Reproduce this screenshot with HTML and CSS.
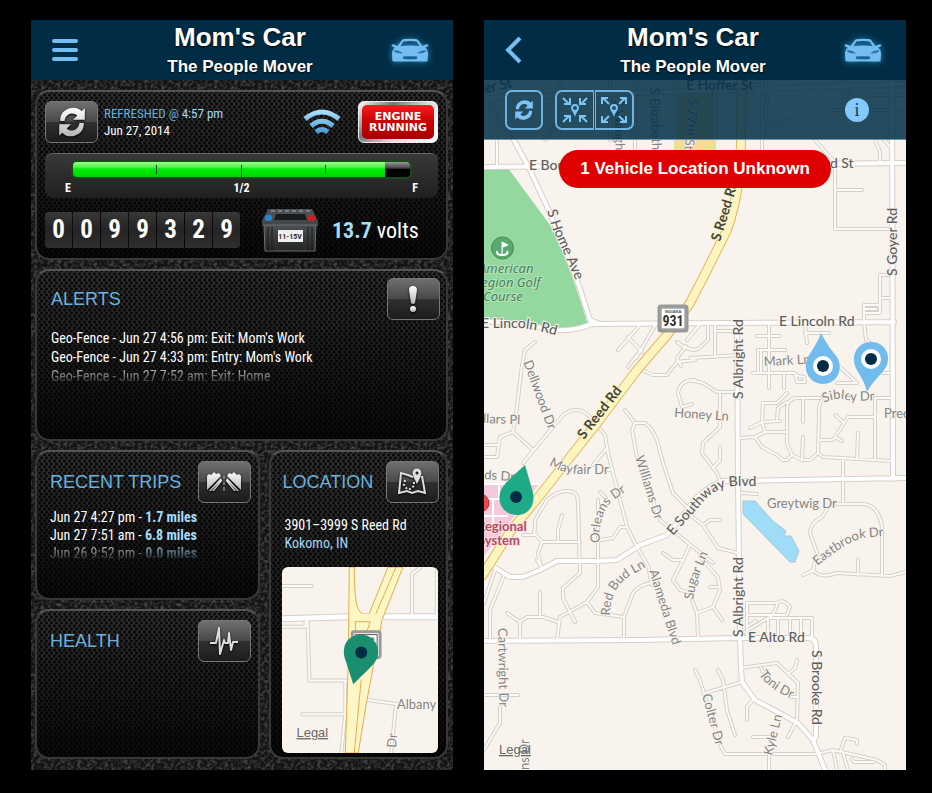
FILE: index.html
```html
<!DOCTYPE html>
<html lang="en">
<head>
<meta charset="utf-8">
<meta name="viewport" content="width=device-width, initial-scale=1">
<title>Mom's Car</title>
<link rel="stylesheet" href="styles.css">
</head>
<body>
<svg class="defs" aria-hidden="true">
  <defs>
    <linearGradient id="silver" x1="0" y1="0" x2="0" y2="1"><stop offset="0" stop-color="#fff"/><stop offset="1" stop-color="#b4b4b4"/></linearGradient>
    <linearGradient id="sky" x1="0" y1="0" x2="0" y2="1"><stop offset="0" stop-color="#a5dcff"/><stop offset="1" stop-color="#4f9fd0"/></linearGradient>
    <linearGradient id="case" x1="0" y1="0" x2="0" y2="1"><stop offset="0" stop-color="#4d5052"/><stop offset="1" stop-color="#222425"/></linearGradient>
    <symbol id="car" viewBox="0 0 110 72">
      <path fill-rule="evenodd" d="M19 23 L31 6 Q34 2 55 2 Q76 2 79 6 L91 23 L104 18 Q110 18 108 23 L99 28 Q108 35 107 48 L106 65 Q106 68 101 68 L9 68 Q4 68 4 65 L3 48 Q2 35 11 28 L2 23 Q0 18 6 18 Z M27 24 Q55 19 83 24 L74 10 Q55 7 36 10 Z M9 38 Q18 46 34 44 Q26 35 9 35 Z M101 38 Q92 46 76 44 Q84 35 101 35 Z M37 53 Q34 53 34 57 Q34 61 38 61 L72 61 Q76 61 76 57 Q76 53 73 53 Z"/>
    </symbol>
    <symbol id="refresh" viewBox="0 0 30 30">
      <path d="M4 14 C3 2 19 -2 24 5 L27 2 V13 H16 L20 9 C16 5 9 7 8 14 Z M26 16 C27 28 11 32 6 25 L3 28 V17 H14 L10 21 C14 25 21 23 22 16 Z"/>
    </symbol>
    <symbol id="pin" viewBox="0 0 8 13">
      <path fill-rule="evenodd" d="M4 0A4 4 0 0 1 8 4C8 6 5.500 8 4 13C2.500 8 0 6 0 4A4 4 0 0 1 4 0ZM4 2A2 2 0 1 0 4 6A2 2 0 1 0 4 2Z"/>
    </symbol>
  </defs>
</svg>

<section class="phone" aria-label="Dashboard">
  <header class="bar">
    <button class="bar-button" aria-label="Menu"><svg width="28" height="22" viewBox="0 0 28 22"><path d="M3 2H25M3 11H25M3 20H25" stroke="#74bdf0" stroke-width="4" stroke-linecap="round"/></svg></button>
    <div class="titles"><h1>Mom's Car</h1><p>The People Mover</p></div>
    <button class="bar-button" aria-label="Vehicle"><svg class="car" width="38" height="25"><use href="#car"/></svg></button>
  </header>
  <main class="dash">
    <section class="panel status">
      <div class="status-row">
        <button class="tile" aria-label="Refresh"><svg width="32" height="32" fill="url(#silver)"><use href="#refresh"/></svg></button>
        <p class="stamp"><span class="blue">REFRESHED @</span> <span class="pale">4:57 pm</span><br>Jun 27, 2014</p>
        <svg class="wifi" width="38" height="26" viewBox="0 0 38 26" fill="none" stroke="url(#sky)" stroke-width="5"><path d="M2 10Q19 -4 36 10M8 17Q19 7.500 30 17M13 23Q19 18 25 23"/></svg>
        <button class="engine"><span>ENGINE<br>RUNNING</span></button>
      </div>
      <div class="fuel">
        <div class="track" role="meter" aria-label="Fuel level" aria-valuemin="0" aria-valuemax="100" aria-valuenow="92"><div class="level" style="width:92.5%"></div><div class="ticks"><i></i><i></i><i></i></div></div>
        <div class="marks"><span>E</span><span>1/2</span><span>F</span></div>
      </div>
      <div class="status-row readings">
        <div class="odometer" aria-label="Odometer"><span>0</span><span>0</span><span>9</span><span>9</span><span>3</span><span>2</span><span>9</span></div>
        <svg class="battery" width="58" height="44" viewBox="0 0 58 44">
          <path d="M7 1H51L57 13H1Z" fill="#4b5056"/><path d="M10 3H49" stroke="#777d82" stroke-width="2" stroke-dasharray="4 3"/>
          <path d="M15 6H44L46 12H13Z" fill="#191b1c"/>
          <path d="M1 12H57V18H1Z" fill="#44474a"/><path d="M3 17H55L54 43H4Z" fill="url(#case)" stroke="#6c7072"/>
          <path d="M7 19V43M11 19V43M47 19V43M51 19V43" stroke="#181a1b"/>
          <rect x="4" y="7" width="7" height="6" rx="2" fill="#1e88d6"/><rect x="47" y="7" width="7" height="6" rx="2" fill="#cf1f24"/>
          <rect x="17" y="22" width="25" height="12" fill="#f1f1f1"/><text x="29" y="31" class="cell">11-15V</text>
        </svg>
        <p class="volts"><b>13.7</b> volts</p>
      </div>
    </section>

    <section class="panel alerts">
      <div class="panel-head"><h2>ALERTS</h2>
        <button class="tile" aria-label="Alerts"><svg width="14" height="28" viewBox="0 0 14 28" fill="url(#silver)"><path d="M3 5Q3 1 7 1Q11 1 11 5L9 18Q7 20 5 18Z"/><circle cx="7" cy="24" r="3"/></svg></button></div>
      <ul class="list">
        <li>Geo-Fence - Jun 27 4:56 pm: Exit: Mom's Work</li>
        <li>Geo-Fence - Jun 27 4:33 pm: Entry: Mom's Work</li>
        <li class="fading">Geo-Fence - Jun 27 7:52 am: Exit: Home</li>
      </ul>
    </section>

    <section class="panel trips">
      <div class="panel-head"><h2>RECENT TRIPS</h2>
        <button class="tile" aria-label="Recent trips"><svg width="38" height="22" viewBox="0 0 38 22" fill="url(#silver)"><path d="M2 5L4 3L6 4L9 1L11 3L14 2L16 5L2 19ZM36 5L34 3L32 4L29 1L27 3L24 2L22 5L36 19Z"/><path d="M16 7L4 20H6L17 8V10L9 20H7L16 9ZM22 7L34 20H32L21 8V10L29 20H31L22 9Z"/><path d="M19 5V8M19 11V14M19 16V20" stroke="#c5c5c5"/></svg></button></div>
      <ul class="list tight">
        <li>Jun 27 4:27 pm - <b>1.7 miles</b></li>
        <li>Jun 27 7:51 am - <b>6.8 miles</b></li>
        <li class="fading">Jun 26 9:52 pm - <b>0.0 miles</b></li>
      </ul>
    </section>

    <section class="panel location">
      <div class="panel-head"><h2>LOCATION</h2>
        <button class="tile" aria-label="Location"><svg width="28" height="28" viewBox="0 0 28 28" fill="none" stroke="#ddd" stroke-width="2"><path d="M15 9L10 7L3 5L1 25L9 23L14 25L20 23L27 25L24 8"/><path d="M7 12L6 17L9 21H12L16 18V14" stroke-dasharray="2 2"/><circle cx="19" cy="5" r="3" stroke-width="3"/><path d="M15 8L19 16L23 8" fill="#ddd" stroke="none"/></svg></button></div>
      <address>3901–3999 S Reed Rd<br><span class="pale">Kokomo, IN</span></address>
      <svg class="mini-map" viewBox="281 567 158 187" preserveAspectRatio="xMidYMid slice" role="img" aria-label="Vehicle location map">
        <defs>
          <path id="mini-roads" d="M281 586H311M281 627H305V622M307 621L309 681H349M345 681V715L341 754M302 715H344M362 700L398 705M396 705L391 754M412 617V574L421 567M437 567V617"/>
          <path id="mini-main" d="M281 619L350 617H439"/>
        </defs>
        <path fill="#f8f4ed" d="M281 567H439V754H281Z"/>
        <use href="#mini-roads" class="case minor-case"/><use href="#mini-main" class="case mini-case"/>
        <use href="#mini-roads" class="road minor"/><use href="#mini-main" class="road mini"/>
        <path fill="#fdf6c5" stroke="#eba94a" d="M349 567L348 662L345 754H358L366 705L382 620L403 567H388L369 614Q363 616 359 611Q354 605 354 567Z"/>
        <path d="M355 622H370L366 634L356 641ZM396 567L374 618M361 680L354 754" fill="none" stroke="#eba94a"/>
        <path d="M350 617H382" stroke="#fdf6c5" stroke-width="6"/>
        <rect x="352" y="632" width="28" height="26" rx="2" fill="#fff" stroke="#999" stroke-width="3"/><rect x="355" y="635" width="22" height="20" fill="#fff" stroke="#555"/>
        <text x="366" y="640" class="shield-small">INDIANA</text>
        <path fill="#198f70" d="M353 685L346 663C339 646 348 635 361 635C374 635 381 648 377 659C374 665 365 673 353 685Z"/><circle cx="361" cy="653" r="6" fill="#002d45"/>
        <text class="label" x="397" y="710">Albany</text><text class="label" transform="translate(396 749) rotate(-86)">Dr</text>
        <a href="#legal"><text class="legal" x="296" y="738">Legal</text></a>
      </svg>
    </section>

    <section class="panel health">
      <div class="panel-head"><h2>HEALTH</h2>
        <button class="tile" aria-label="Health"><svg width="30" height="30" viewBox="0 0 30 30" fill="none" stroke="#ddd" stroke-width="2" stroke-linejoin="round"><path d="M1 17H7L10 2L11 28L15 14L16 17H19L20 7L22 24L24 16H29"/></svg></button></div>
    </section>
  </main>
</section>

<section class="phone" aria-label="Map">
  <header class="bar">
    <button class="bar-button" aria-label="Back"><svg width="22" height="28" viewBox="0 0 22 28"><path d="M16 2L4 14L16 26" fill="none" stroke="#74bdf0" stroke-width="4"/></svg></button>
    <div class="titles"><h1>Mom's Car</h1><p>The People Mover</p></div>
    <button class="bar-button" aria-label="Vehicle"><svg class="car" width="38" height="25"><use href="#car"/></svg></button>
  </header>
  <main class="map-screen">
    <svg class="map" viewBox="484 80 422 690" preserveAspectRatio="xMidYMin slice" role="img" aria-label="Map of Kokomo, Indiana">
      <defs>
        <path id="streets" d="M497 140V167M535 342L525 350L522 365L517 407L513 432L500 437L497 457H484M484 445H498M513 432L533 450
          M640 325L618 350M628 337L642 352M655 326L636 358M700 324L687 340M677 342L684 347L693 350L698 349L708 340V326M686 346L677 358L681 366M715 325V357M690 358L740 355M715 331H738
          M815 140L830 157L835 163V229H893M835 190H862M875 140L880 152V162M884 140L893 150M890 275H880V313H865M893 298H880M864 305H880M864 322V305M864 322L866 340L876 347M865 309H876
          M769 323V388M757 336H780M758 373V350H785M805 324L807 343M805 333H829
          M523 463L553 427L563 415Q577 405 588 415L597 425L605 435L608 453L613 473L627 527L637 547L648 566L652 585M593 465L607 448M603 470H612
          M535 520L547 500Q560 488 573 492Q578 494 578 503L580 573L563 588V598L575 622M562 515L558 530V542M542 542H580M523 535H534Q536 520 535 520M534 533L542 542L538 553L541 567
          M600 492L606 498M598 500V587L587 602L560 617L557 640M587 602L595 613L624 617V638M624 617L633 593Q640 584 652 583M600 540L613 538L620 527H627
          M625 410L635 423L632 430L637 457L660 520L693 547L713 563M635 423H645Q652 428 657 440L663 463L673 493L687 507
          M642 370L653 375H667L677 362L695 360M628 367L637 355M695 380Q680 380 678 393L682 407M682 407L692 404M663 553L673 560H683L690 545M683 560L673 580L680 590L692 593
          M690 380L703 383L717 392H738M720 392V427L703 443L702 453L717 473L720 481M720 447V460L713 468
          M740 438L755 437L762 447L777 455L783 460H787L792 455L787 443V410Q787 398 797 398H820M822 400Q818 405 819 417L818 453L810 460H802L792 455M803 400V422M803 437L802 458M750 428L762 422L780 421M763 403L762 422L765 432H787M755 437L765 432M763 403H777L787 393M777 420L778 408L787 402
          M818 453L823 457L892 461M875 398V460M820 440H833L848 417H875M835 415L843 422M835 437L842 441M858 433L857 458M843 458V503M837 504H864Q879 506 882 527V575M828 508L822 517Q810 523 810 533L817 553L813 570Q820 579 837 573L890 576L906 572M803 575L814 570M858 560V575M740 493L757 494M690 515L703 525L718 548L738 553M703 525L710 520H720M753 373H795L797 382H805L804 377L795 375M784 388V373M761 350V372M875 398H892M883 373H893M837 383H857L840 367
          M495 570L484 603M505 573L490 610V639M540 592V617M507 613L520 622V640M520 622L527 617H543L558 622M537 560L542 569
          M692 600L697 613L698 638M700 557L718 577L720 590L713 607L697 613M710 587H718M713 607L722 620
          M484 695H518M500 707V723L484 750M747 638V603H777Q783 598 790 607L787 615H773L777 605M743 633L773 615M747 615H773M747 627L756 621M768 618H812V638M768 618V635M778 618V635M790 618V635M801 618V635
          M740 668L777 663L798 683L797 720L788 737M797 660L795 668L789 673M760 665L763 672M790 697H798M742 682L705 693M695 670L700 680L709 710L721 747L725 754H815M718 670L723 680L727 710L735 735M753 700L747 707V720M753 737H775M769 755V770
          M820 753L833 750L877 760L885 765V770M840 752L845 738L857 740V744M833 750L837 770M843 753L848 770M852 759L854 762H874
          M484 95L498 118L514 140M560 80V120L545 140M610 80V140M635 80V165M675 80V140M715 90V140M762 80V165M770 80L762 140M830 110H900M840 80L860 110M760 130L790 120H815M870 95H906"/>
        <path id="avenues" d="M484 167L640 166L906 163M484 98L906 84M514 140L530 170L550 213L577 280L590 320L600 324M592 324L580 328Q560 332 548 329L520 324L484 321M590 324L894 322M892 80L893 479M737 322L738 480L740 638L741 668L742 682L755 700L798 723L813 740L826 772M906 478L740 481H722Q700 490 687 510L667 535L640 545L617 560L597 561H557L540 570L523 577H510L491 565M484 641L640 640L740 638H808Q816 638 816 647V737L813 741"/>
        <path id="highway" d="M742 78L741 140Q741 190 727 230L707 270L690 303L667 335L637 370L597 423L537 499L510 532L482 576"/>
        <path id="t-home" d="M547 211L552 227L579 288"/>
        <path id="t-lincoln" d="M481 328L520 328Q535 329 562 337"/>
        <path id="t-dell" d="M523 362Q532 385 537 400L550 434"/>
        <path id="t-may" d="M549 465Q560 472 576 474H615"/>
        <path id="t-orl" d="M600 543Q598 515 612 501L630 489"/>
        <path id="t-will" d="M635 457L657 527"/>
        <path id="t-south" d="M673 536L704 501Q717 486 738 486H765"/>
        <path id="t-sib" d="M824 403Q838 396 850 401L885 400"/>
        <path id="t-east" d="M817 566Q845 543 862 538L896 535"/>
        <path id="t-red" d="M610 616Q610 588 630 576L656 561"/>
        <path id="t-ala" d="M649 571L678 662"/>
        <path id="t-sugar" d="M693 600L696 583L712 544"/>
        <path id="t-toni" d="M759 674Q768 690 800 702"/>
        <path id="t-colt" d="M702 695L720 762"/>
      </defs>
      <path fill="#f8f4ed" d="M484 80H906V770H484Z"/>
      <path fill="#94d8a0" d="M484 168H508L550 225Q567 256 588 325L566 330Q550 331 535 326L484 319Z"/>
      <path fill="#f5c9dc" d="M484 484H539L484 556Z"/><path d="M484 484H540M484 516H508M493 500V526M499 484V499H487" fill="none" stroke="#fff" stroke-width="2"/>
      <path fill="#f5dc90" d="M674 88H716V151H674Z"/>
      <path fill="#9edcf8" stroke="#a6c9d3" d="M743 501H755L763 510L773 521L786 531L784 536H791L799 551L795 562H790L743 514Z"/>
      <use href="#streets" class="case minor-case"/><use href="#avenues" class="case avenue-case"/>
      <use href="#streets" class="road minor"/><use href="#avenues" class="road avenue"/>
      <use href="#highway" class="case highway-case"/><use href="#highway" class="road highway"/>

      <g class="label strong">
        <text x="686" y="90">E Hoffer St</text><text transform="translate(485 93) rotate(-12)">er St</text>
        <text x="529" y="170">E Boulevard</text><text x="825" y="168">rd St</text>
        <text x="779" y="326">E Lincoln Rd</text><text x="748" y="642">E Alto Rd</text>
        <text transform="translate(897 276) rotate(-90)">S Goyer Rd</text>
        <text transform="translate(743 399) rotate(-90)">S Albright Rd</text>
        <text transform="translate(743 637) rotate(-90)">S Albright Rd</text>
        <text transform="translate(812 650) rotate(90)">S Brooke Rd</text>
        <text><textPath href="#t-home">S Home Ave</textPath></text>
        <text><textPath href="#t-lincoln">E Lincoln Rd</textPath></text>
        <text><textPath href="#t-south">E Southway Blvd</textPath></text>
      </g>
      <g class="label dark">
        <text transform="translate(720 242) rotate(-73)">S Reed Rd</text>
        <text transform="translate(584 440) rotate(-52)">S Reed Rd</text>
      </g>
      <g class="label">
        <text transform="translate(650 88) rotate(88)">S Elizabeth St</text><text transform="translate(689 98) rotate(95)">S 77th St</text><text transform="translate(614 100) rotate(88)">S Waugh St</text>
        <text x="764" y="366" transform="rotate(-3 764 366)">Mark Ln</text><text x="767" y="508">Greytwig Dr</text><text x="884" y="418">Predwood</text>
        <text transform="translate(674 417) rotate(4)">Honey Ln</text><text transform="translate(483 423) rotate(2)">llars Pl</text><text transform="translate(484 479) rotate(4)">ds Dr</text>
        <text transform="translate(498 628) rotate(89)">Cartwright Dr</text><text transform="translate(529 770) rotate(-90)">ns Dr</text>
        <text transform="translate(772 756) rotate(-76)">Kyle Ln</text>
        <text><textPath href="#t-dell">Dellwood Dr</textPath></text><text><textPath href="#t-may">Mayfair Dr</textPath></text>
        <text><textPath href="#t-orl">Orleans Dr</textPath></text><text><textPath href="#t-will">Williams Dr</textPath></text>
        <text><textPath href="#t-sib">Sibley Dr</textPath></text><text><textPath href="#t-east">Eastbrook Dr</textPath></text>
        <text><textPath href="#t-red">Red Bud Ln</textPath></text><text><textPath href="#t-ala">Alameda Blvd</textPath></text>
        <text><textPath href="#t-sugar">Sugar Ln</textPath></text><text><textPath href="#t-toni">Toni Dr</textPath></text><text><textPath href="#t-colt">Colter Dr</textPath></text>
      </g>
      <g class="golf-label"><text x="479" y="273">American</text><text x="475" y="287">Legion Golf</text><text x="483" y="301">Course</text></g>
      <g class="care-label"><text x="477" y="531">Regional</text><text x="478" y="545">System</text></g>
      <circle cx="502.500" cy="248" r="11" fill="#5ba96d" stroke="#3f8b52"/><path d="M502 254V242L508 245L503 247" fill="#fff" stroke="#fff"/><path d="M497 251Q496 255 502 255Q509 255 507 251" fill="none" stroke="#fff" stroke-width="2"/>
      <circle cx="480" cy="503" r="9" fill="#e9484e" stroke="#bc3036"/>
      <rect x="659" y="306" width="28" height="25" rx="2" fill="#fff" stroke="#999" stroke-width="3"/><rect x="661" y="308" width="24" height="21" fill="#fff" stroke="#777"/>
      <text x="673" y="313" class="shield-small">INDIANA</text><text x="673" y="326" class="shield">931</text>
      <path fill="#1eaa87" d="M525 465L532 489C537 504 529 515 517 515C503 515 496 502 501 490C504 483 513 476 525 465Z"/><circle cx="516" cy="497" r="6" fill="#002d45"/>
      <path fill="#72bced" d="M821 333C827 345 833 352 837 357C844 369 837 384 823 384C809 384 802 369 808 357C812 350 817 344 821 333Z"/><circle cx="823" cy="366" r="10" fill="#fff"/><circle cx="823" cy="366" r="6" fill="#002d45"/>
      <path fill="#72bced" d="M867 392C865 382 860 376 857 370C849 355 858 342 871 342C885 342 892 356 886 367C881 375 872 382 867 392Z"/><circle cx="871" cy="359" r="10" fill="#fff"/><circle cx="871" cy="359" r="6" fill="#002d45"/>
      <a href="#legal"><text class="legal" x="499" y="754">Legal</text></a>
    </svg>
    <div class="overlay">
      <nav class="toolbar" aria-label="Map tools">
        <button class="tool" aria-label="Refresh"><svg width="22" height="24" fill="#7bc4f5"><use href="#refresh"/></svg></button>
        <div class="tool-pair">
          <button class="tool" aria-label="Zoom to vehicle"><svg width="26" height="28" viewBox="0 0 26 28" fill="none" stroke="#7bc4f5" stroke-width="2"><path d="M1 2L7 8M2 8H8V2M25 2L19 8M24 8H18V2M1 26L7 20M2 20H8V26M25 26L19 20M24 20H18V26"/><use href="#pin" x="9" y="8" width="8" height="13" fill="#7bc4f5" stroke="none"/></svg></button>
          <button class="tool" aria-label="Zoom to all"><svg width="26" height="28" viewBox="0 0 26 28" fill="none" stroke="#7bc4f5" stroke-width="2"><path d="M2 2L8 8M1 8V2H7M24 2L18 8M25 8V2H19M2 26L8 20M1 20V26H7M24 26L18 20M25 20V26H19"/><use href="#pin" x="9" y="8" width="8" height="13" fill="#7bc4f5" stroke="none"/></svg></button>
        </div>
        <button class="info" aria-label="Information">i</button>
      </nav>
      <p class="notice" role="status">1 Vehicle Location Unknown</p>
    </div>
  </main>
</section>
</body>
</html>
```
FILE: styles.css
```css
* { box-sizing: border-box; }
body {
  margin: 0;
  min-height: 100vh;
  padding: 20px 26px 23px 31px;
  display: flex;
  gap: 31px;
  background: #000;
  color: #fff;
  font-family: "Liberation Sans", Arial, sans-serif;
}
h1, h2, p, ul { margin: 0; padding: 0; }
button { padding: 0; border: 0; background: none; font: inherit; color: inherit; cursor: pointer; }
svg { display: block; }
.defs { position: absolute; width: 0; height: 0; }
.phone { flex: 1; min-width: 0; display: flex; flex-direction: column; }

/* Title bar */
.bar {
  display: flex;
  align-items: center;
  justify-content: space-between;
  height: 60px;
  padding: 0 24px 0 20px;
  background: #002d45;
}
.bar-button { width: 48px; display: flex; }
.bar-button:last-child { justify-content: flex-end; }
.titles { padding-top: 2px; text-align: center; text-shadow: 0 1px 2px #000; }
.titles h1 { font-size: 26px; line-height: 32px; }
.titles p { font-size: 17px; line-height: 28px; font-weight: bold; }
.car { fill: #74bdf0; filter: drop-shadow(0 0 3px #2f8fcc); }

/* Dashboard */
.dash {
  flex: 1;
  display: grid;
  grid-template-columns: 224fr 179fr;
  grid-template-rows: auto 172fr 150fr 150fr;
  gap: 9px;
  padding: 10px 5px 11px 4px;
  background: #131313 url("data:image/svg+xml,%3Csvg xmlns='http://www.w3.org/2000/svg' width='120' height='120'%3E%3Cfilter id='n'%3E%3CfeTurbulence type='fractalNoise' baseFrequency='.3' numOctaves='3' stitchTiles='stitch'/%3E%3CfeColorMatrix values='0 0 0 0 .3 0 0 0 0 .3 0 0 0 0 .3 1 0 0 0 -.4'/%3E%3C/filter%3E%3Crect width='120' height='120' filter='url(%23n)'/%3E%3C/svg%3E");
  font-family: "Liberation Sans Narrow", "Roboto Condensed", "Liberation Sans", sans-serif;
  font-size: 14px;
}
.panel {
  min-width: 0;
  min-height: 0;
  padding: 8px;
  border: 2px solid #383838;
  border-top-color: #555;
  border-radius: 14px;
  background:
    linear-gradient(rgba(0, 0, 0, 0), rgba(0, 0, 0, .8)) padding-box,
    radial-gradient(circle, #090909 1px, transparent 2px) 0 0 / 5px 6px,
    radial-gradient(circle, #090909 1px, transparent 2px) 2px 3px / 5px 6px,
    #303030;
  display: flex;
  flex-direction: column;
}
.status, .alerts { grid-column: 1 / -1; }
.trips { grid-area: 3 / 1; }
.health { grid-area: 4 / 1; }
.location { grid-area: 3 / 2 / 5 / 3; }
.tile {
  display: flex;
  align-items: center;
  justify-content: center;
  flex: none;
  width: 53px;
  height: 42px;
  border: 1px solid #777;
  border-radius: 6px;
  background: linear-gradient(#6f6f6f, #484848 50%, #303030 51%, #1c1c1c);
}
.tile svg { filter: drop-shadow(0 1px 1px #000); }
.blue { color: #65afd9; }
.pale { color: #a2d9fa; }

.status { gap: 10px; padding: 9px 8px 6px; }
.status-row { display: flex; align-items: center; }
.stamp { margin-left: 6px; font-size: 13px; line-height: 17px; }
.wifi { margin-left: auto; }
.engine {
  margin-left: 17px;
  padding: 3px;
  border: 1px solid #eee;
  border-radius: 6px;
  background: linear-gradient(135deg, #fff, #777 30%, #ddd 60%, #fff);
}
.engine span {
  display: block;
  width: 72px;
  padding: 6px 0;
  border-radius: 5px;
  background: linear-gradient(#f02020, #c80000 50%, #a80000);
  font: bold 11px/11px "DejaVu Sans", sans-serif;
  text-align: center;
}
.fuel {
  height: 45px;
  padding: 6px 26px;
  border-radius: 8px;
  border-top: 1px solid #666;
  background: linear-gradient(#383838, #202020);
}
.track {
  position: relative;
  height: 19px;
  border: 2px solid #194b19;
  border-radius: 6px;
  background: linear-gradient(#999, #444 40%, #000 50%);
  overflow: hidden;
}
.level { height: 100%; background: linear-gradient(#9cff8b, #50f04a 35%, #00ef08 45%, #00d400); }
.ticks { position: absolute; inset: 3px 0 0; display: flex; justify-content: space-evenly; }
.ticks i { width: 1px; height: 9px; background: #063d06; }
.ticks i:nth-child(2) { height: 15px; }
.marks { display: flex; justify-content: space-between; margin: 0 -6px; font-size: 12px; line-height: 18px; font-weight: bold; }
.readings { gap: 21px; height: 44px; }
.odometer { display: flex; gap: 1px; border-radius: 4px; overflow: hidden; }
.odometer span {
  width: 27px;
  background: linear-gradient(#383838, #242424 50%, #2e2e2e);
  font-size: 25px;
  line-height: 36px;
  font-weight: bold;
  text-align: center;
}
.cell { fill: #333; font: bold 8px "Liberation Sans Narrow", "Roboto Condensed", sans-serif; text-anchor: middle; }
.volts { margin-left: -8px; font-size: 22px; white-space: nowrap; }
.volts b, .list b { color: #a6ddfc; }

.panel-head { display: flex; align-items: center; justify-content: space-between; padding-left: 6px; }
h2 { color: #69b2df; font: 18px/24px "Liberation Sans", Arial, sans-serif; }
.alerts { padding: 7px 6px 7px 8px; }
.location .panel-head { padding-left: 5px; }
.trips, .health, .location { padding: 9px 7px 4px; }
.list { margin: 9px 0 0 6px; list-style: none; line-height: 19px; white-space: nowrap; }
.tight { margin-top: 5px; line-height: 18px; }
.fading { -webkit-mask-image: linear-gradient(rgba(0, 0, 0, .8), transparent); mask-image: linear-gradient(rgba(0, 0, 0, .8), transparent); }
address { margin: 13px 0 0 7px; font-style: normal; line-height: 18px; white-space: nowrap; }
.mini-map { flex: 1 1 0; height: 0; min-height: 120px; margin: 15px 1px 0 4px; border-radius: 6px; }

/* Map */
.map-screen { flex: 1; display: grid; }
.map, .overlay { grid-area: 1 / 1; min-width: 0; }
.map { width: 100%; height: 100%; }
.overlay { position: relative; display: flex; flex-direction: column; align-items: center; gap: 10px; }
.toolbar {
  width: 100%;
  height: 60px;
  padding: 0 37px 0 21px;
  display: flex;
  align-items: center;
  border-bottom: 1px solid #6d93ad;
  background: rgba(0, 45, 69, .85);
}
.tool {
  width: 38px;
  height: 40px;
  display: flex;
  align-items: center;
  justify-content: center;
  border: 2px solid #6db4e2;
  border-radius: 7px;
}
.tool-pair { display: flex; gap: 1px; margin-left: 12px; }
.tool-pair .tool { width: 39px; }
.tool-pair .tool:first-child { border-radius: 7px 0 0 7px; border-right-width: 1px; }
.tool-pair .tool:last-child { border-radius: 0 7px 7px 0; border-left-width: 1px; }
.info {
  margin-left: auto;
  width: 24px;
  height: 24px;
  border-radius: 50%;
  background: #83cafa;
  color: #123c55;
  font: 18px/24px "Liberation Serif", serif;
}
.notice {
  padding: 0 21px;
  border-radius: 19px;
  background: #df0000;
  font-size: 17px;
  line-height: 38px;
  font-weight: bold;
  white-space: nowrap;
}
.case, .road { fill: none; stroke-linejoin: round; stroke-linecap: round; }
.case { stroke: #d4d0ca; }
.road { stroke: #fcfaf6; }
.minor-case { stroke-width: 4; }
.minor { stroke-width: 2; }
.avenue-case { stroke-width: 6; }
.avenue { stroke: #fff; stroke-width: 4; }
.mini-case { stroke-width: 7; }
.mini { stroke: #fff; stroke-width: 5; }
.highway-case { stroke: #e9b65c; stroke-width: 10; }
.highway { stroke: #fdf5c0; stroke-width: 8; }
.label { fill: #858585; font: 13px Lato, "Noto Sans", sans-serif; paint-order: stroke; stroke: #f8f4ed; stroke-width: 2px; }
.strong { fill: #606060; font-size: 14px; font-weight: 500; }
.dark { fill: #444; font-size: 14px; font-weight: bold; stroke: #fdf5c0; }
.golf-label { fill: #478357; font: italic 13px "Noto Sans", sans-serif; paint-order: stroke; stroke: #b4e2ba; stroke-width: 2px; }
.care-label { fill: #b04e5b; font: bold 13px Lato, sans-serif; paint-order: stroke; stroke: #f9dfe8; stroke-width: 2px; }
.legal { fill: #666; font: 13px "Liberation Sans", sans-serif; text-decoration: underline; }
.shield { fill: #333; font: bold 14px "Liberation Sans Narrow", "Roboto Condensed", sans-serif; text-anchor: middle; }
.shield-small { fill: #555; font: bold 4px "Liberation Sans", sans-serif; text-anchor: middle; }
```
